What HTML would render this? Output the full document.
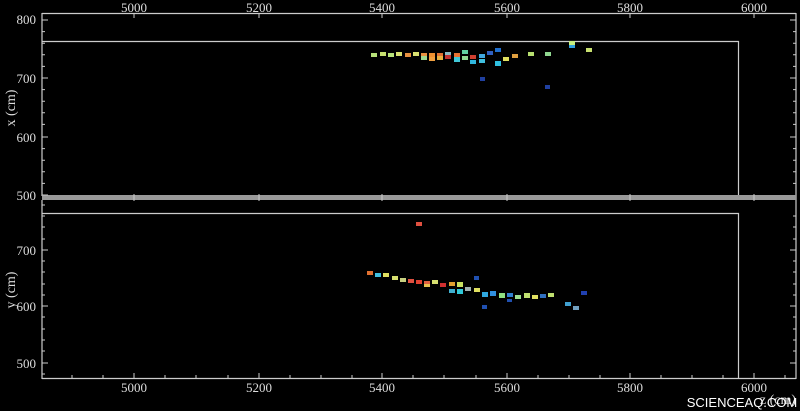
<!DOCTYPE html>
<html><head><meta charset="utf-8"><style>
html,body{margin:0;padding:0;background:#000;}
svg{display:block;}
text{font-family:"Liberation Serif",serif;font-size:13px;fill:#ddd;}
</style></head><body>
<svg width="800" height="411" viewBox="0 0 800 411" xmlns="http://www.w3.org/2000/svg">
<rect width="800" height="411" fill="#000"/>
<g stroke="#ccc" stroke-width="1.2" fill="none">
<line x1="42" y1="13.5" x2="796" y2="13.5"/>
<line x1="42" y1="13" x2="42" y2="196"/>
<line x1="796" y1="13" x2="796" y2="379"/>
<polyline points="42,41.5 738.5,41.5 738.5,196"/>
<line x1="42" y1="200" x2="42" y2="379"/>
<line x1="42" y1="378.5" x2="796" y2="378.5"/>
<polyline points="42,213.5 738.5,213.5 738.5,378"/>
</g>
<rect x="42" y="195" width="754" height="5" fill="#999"/>
<g stroke="#ccc" stroke-width="1">
<path d="M42 20h6M42 78h6M42 137h6M42 195h6M42 250h6M42 306h6M42 363h6"/>
<path d="M42 31.6h3M42 43.2h3M42 54.8h3M42 66.4h3M42 89.6h3M42 101.2h3M42 112.8h3M42 124.4h3M42 148.6h3M42 160.2h3M42 171.8h3M42 183.4h3"/>
<path d="M42 205h3M42 216h3M42 227h3M42 239h3M42 261h3M42 272h3M42 284h3M42 295h3M42 317h3M42 329h3M42 340h3M42 351h3M42 374h3"/>
<path d="M796 20h-6M796 78h-6M796 137h-6M796 250h-6M796 306h-6M796 363h-6"/>
<path d="M796 31.6h-3M796 43.2h-3M796 54.8h-3M796 66.4h-3M796 89.6h-3M796 101.2h-3M796 112.8h-3M796 124.4h-3M796 148.6h-3M796 160.2h-3M796 171.8h-3M796 183.4h-3"/>
<path d="M796 216h-3M796 227h-3M796 239h-3M796 261h-3M796 272h-3M796 284h-3M796 295h-3M796 317h-3M796 329h-3M796 340h-3M796 351h-3"/>
<path d="M134 378v-5M259 378v-5M382 378v-5M507 378v-5M630 378v-5M754 378v-5"/>
<path d="M72 378v-3M103 378v-3M165 378v-3M196 378v-3M228 378v-3M290 378v-3M321 378v-3M352 378v-3M413 378v-3M444 378v-3M476 378v-3M538 378v-3M569 378v-3M600 378v-3M661 378v-3M692 378v-3M723 378v-3M785 378v-3"/>
<path d="M134 13v5M259 13v5M382 13v5M507 13v5M630 13v5M754 13v5"/>
<path d="M134 194v7M259 194v7M382 194v7M507 194v7M630 194v7M754 194v7"/>
</g>
<text x="36" y="24" text-anchor="end">800</text>
<text x="36" y="83" text-anchor="end">700</text>
<text x="36" y="142" text-anchor="end">600</text>
<text x="36" y="200" text-anchor="end">500</text>
<text x="36" y="255" text-anchor="end">700</text>
<text x="36" y="311" text-anchor="end">600</text>
<text x="36" y="368" text-anchor="end">500</text>
<text transform="translate(15,108) rotate(-90)" text-anchor="middle" style="font-size:14px">x (cm)</text>
<text transform="translate(15,290) rotate(-90)" text-anchor="middle" style="font-size:14px">y (cm)</text>
<g text-anchor="middle">
<text x="134" y="12">5000</text><text x="259" y="12">5200</text><text x="382" y="12">5400</text>
<text x="507" y="12">5600</text><text x="630" y="12">5800</text><text x="754" y="12">6000</text>
<text x="134" y="392">5000</text><text x="259" y="392">5200</text><text x="382" y="392">5400</text>
<text x="507" y="392">5600</text><text x="630" y="392">5800</text><text x="754" y="392">6000</text>
</g>
<text x="778" y="404" text-anchor="middle" style="font-size:14px">z (cm)</text>
<text x="742" y="407" text-anchor="middle" style="font-family:'Liberation Sans',sans-serif;font-size:13px;fill:#fff">SCIENCEAQ.COM</text>
<g>
<rect x="371" y="53" width="6" height="4" fill="#b8e27a"/>
<rect x="380" y="52" width="6" height="4" fill="#c8e070"/>
<rect x="388" y="53" width="6" height="4" fill="#b8e27a"/>
<rect x="396" y="52" width="6" height="4" fill="#d8e070"/>
<rect x="405" y="53" width="6" height="4" fill="#e89040"/>
<rect x="413" y="52" width="6" height="4" fill="#d8e070"/>
<rect x="421" y="53" width="6" height="4" fill="#e89040"/>
<rect x="421" y="56" width="6" height="4" fill="#9fd890"/>
<rect x="429" y="53" width="6" height="4" fill="#f09030"/>
<rect x="429" y="57" width="6" height="4" fill="#f0a040"/>
<rect x="437" y="53" width="6" height="4" fill="#e07030"/>
<rect x="437" y="56" width="6" height="4" fill="#e8b040"/>
<rect x="445" y="52" width="6" height="4" fill="#88b8c0"/>
<rect x="445" y="55" width="6" height="4" fill="#c03030"/>
<rect x="454" y="53" width="6" height="4" fill="#e87030"/>
<rect x="454" y="57" width="6" height="5" fill="#40c8d8"/>
<rect x="462" y="50" width="6" height="4" fill="#60d0a0"/>
<rect x="462" y="56" width="6" height="4" fill="#90d890"/>
<rect x="470" y="55" width="6" height="4" fill="#d04030"/>
<rect x="470" y="60" width="6" height="4" fill="#30b8e0"/>
<rect x="479" y="54" width="6" height="4" fill="#40a8e0"/>
<rect x="479" y="59" width="6" height="4" fill="#40c0e0"/>
<rect x="487" y="51" width="6" height="4" fill="#3060c0"/>
<rect x="495" y="48" width="6" height="4" fill="#2070d0"/>
<rect x="495" y="61" width="6" height="5" fill="#30c0e0"/>
<rect x="503" y="57" width="6" height="4" fill="#e0e060"/>
<rect x="512" y="54" width="6" height="4" fill="#e0a040"/>
<rect x="528" y="52" width="6" height="4" fill="#b8e070"/>
<rect x="545" y="52" width="6" height="4" fill="#90d890"/>
<rect x="569" y="41" width="6" height="4" fill="#c8f080"/>
<rect x="569" y="45" width="6" height="3" fill="#30a0e0"/>
<rect x="586" y="48" width="6" height="4" fill="#c8e070"/>
<rect x="480" y="77" width="5" height="4" fill="#2040a0"/>
<rect x="545" y="85" width="5" height="4" fill="#2040a0"/>
<rect x="416" y="222" width="6" height="4" fill="#e05040"/>
<rect x="367" y="271" width="6" height="4" fill="#e07030"/>
<rect x="375" y="273" width="6" height="4" fill="#40c0e0"/>
<rect x="383" y="273" width="6" height="4" fill="#e0e060"/>
<rect x="392" y="276" width="6" height="4" fill="#d8e070"/>
<rect x="400" y="278" width="6" height="4" fill="#c8d080"/>
<rect x="408" y="279" width="6" height="4" fill="#e05040"/>
<rect x="416" y="280" width="6" height="4" fill="#e04030"/>
<rect x="424" y="281" width="6" height="4" fill="#e06040"/>
<rect x="424" y="284" width="6" height="3" fill="#e8c050"/>
<rect x="432" y="280" width="6" height="4" fill="#d8e070"/>
<rect x="440" y="283" width="6" height="4" fill="#d03030"/>
<rect x="449" y="282" width="6" height="4" fill="#e0a030"/>
<rect x="457" y="282" width="6" height="5" fill="#c8e060"/>
<rect x="449" y="289" width="6" height="4" fill="#40b0d0"/>
<rect x="457" y="289" width="6" height="5" fill="#30c8d8"/>
<rect x="465" y="287" width="6" height="4" fill="#a0b0b0"/>
<rect x="474" y="288" width="6" height="4" fill="#e0e060"/>
<rect x="474" y="276" width="5" height="4" fill="#2050b0"/>
<rect x="482" y="292" width="6" height="5" fill="#30a8e0"/>
<rect x="490" y="291" width="6" height="5" fill="#3090e0"/>
<rect x="499" y="293" width="6" height="5" fill="#90e080"/>
<rect x="507" y="293" width="6" height="4" fill="#3080d0"/>
<rect x="507" y="299" width="5" height="3" fill="#2050b0"/>
<rect x="515" y="295" width="6" height="4" fill="#a0e090"/>
<rect x="524" y="293" width="6" height="5" fill="#c0e070"/>
<rect x="532" y="295" width="6" height="4" fill="#e0e060"/>
<rect x="540" y="294" width="6" height="4" fill="#3070c0"/>
<rect x="548" y="293" width="6" height="4" fill="#c0e070"/>
<rect x="482" y="305" width="5" height="4" fill="#2050b0"/>
<rect x="565" y="302" width="6" height="4" fill="#40a0d0"/>
<rect x="573" y="306" width="6" height="4" fill="#70a0c0"/>
<rect x="581" y="291" width="6" height="4" fill="#2040b0"/>
</g>
</svg>
</body></html>
